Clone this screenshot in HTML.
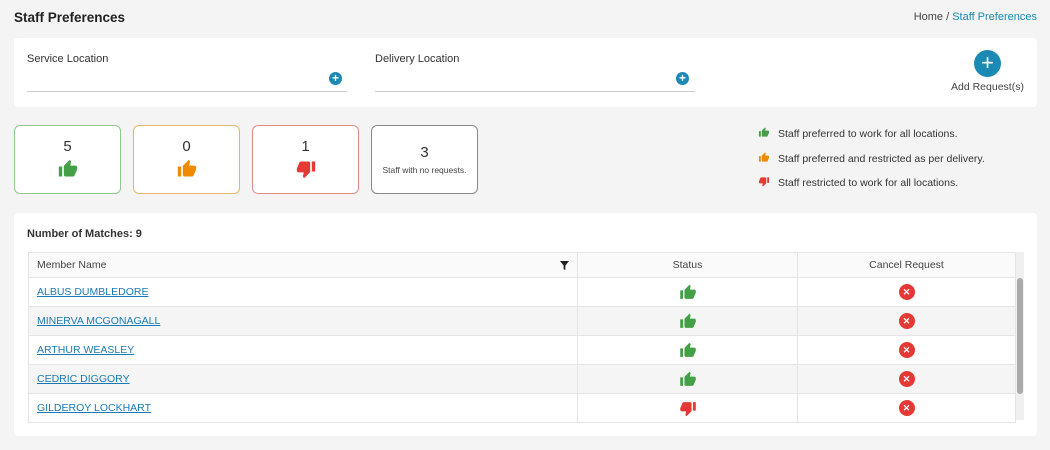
<!DOCTYPE html>
<html><head><style>
*{box-sizing:border-box;margin:0;padding:0}
body{width:1050px;height:450px;background:#f4f4f4;font-family:"Liberation Sans",sans-serif;color:#333;position:relative;overflow:hidden}
.a{position:absolute}
.panel{background:#fff;border-radius:4px}
.card{position:absolute;top:125px;width:107px;height:69px;background:#fff;border:1px solid;border-radius:6px;text-align:center}
.card .n{font-size:15px;margin-top:12px;color:#333}
.plus{position:absolute;width:13px;height:13px;border-radius:50%;background:#1a8ab5;color:#fff;font-size:12px;line-height:13px;text-align:center;font-weight:bold}
table{border-collapse:collapse;width:988px;font-size:10.5px}
td,th{border:1px solid #e4e4e4;height:29px;vertical-align:middle}
th{height:25px;font-weight:normal;background:#fafafa;color:#444}
tr:nth-child(odd) td{background:#f5f5f5}
a{color:#1a7ab5}
.x{display:inline-flex;align-items:center;justify-content:center;width:16px;height:16px;border-radius:50%;background:#e53935;color:#fff;font-size:9px;font-weight:bold;vertical-align:middle}
svg{vertical-align:middle}
</style></head><body>
<svg width="0" height="0" style="position:absolute"><defs>
<symbol id="up" viewBox="0 0 24 24"><path d="M1 21h4V9H1v12zm22-11c0-1.1-.9-2-2-2h-6.31l.95-4.570.03-.32c0-.41-.17-.79-.44-1.06L14.17 1 7.59 7.59C7.22 7.95 7 8.45 7 9v10c0 1.1.9 2 2 2h9c.83 0 1.54-.5 1.84-1.22l3.02-7.05c.09-.23.14-.47.14-.73v-2z"/></symbol>
<symbol id="dn" viewBox="0 0 24 24"><g transform="rotate(180 12 12)"><path d="M1 21h4V9H1v12zm22-11c0-1.1-.9-2-2-2h-6.31l.95-4.57.03-.32c0-.41-.17-.79-.44-1.06L14.17 1 7.59 7.59C7.22 7.95 7 8.45 7 9v10c0 1.1.9 2 2 2h9c.83 0 1.54-.5 1.84-1.22l3.02-7.05c.09-.23.14-.47.14-.73v-2z"/></g></symbol>
</defs></svg>
<div class="a" style="left:14px;top:10px;font-size:13.5px;font-weight:bold;color:#222">Staff Preferences</div>
<div class="a" style="right:13px;top:11px;font-size:11px;color:#444">Home / <span style="color:#1a8ab5">Staff Preferences</span></div>
<div class="a panel" style="left:14px;top:38px;width:1023px;height:69px"></div>
<div class="a" style="left:27px;top:53px;font-size:11px">Service Location</div>
<div class="a" style="left:27px;top:91px;width:320px;border-top:1px solid #ccc"></div>
<div class="plus" style="left:329px;top:72px">+</div>
<div class="a" style="left:375px;top:53px;font-size:11px">Delivery Location</div>
<div class="a" style="left:375px;top:91px;width:320px;border-top:1px solid #ccc"></div>
<div class="plus" style="left:676px;top:72px">+</div>
<div class="a" style="left:974px;top:50px;width:27px;height:27px;border-radius:50%;background:#1a8ab5;color:#fff;font-size:22px;line-height:26px;text-align:center">+</div>
<div class="a" style="left:951px;top:81px;font-size:10.5px;color:#444">Add Request(s)</div>

<div class="card" style="left:14px;border-color:#8fc98f"><div class="n">5</div><svg width="22" height="20" fill="#43a047" style="margin-top:4px"><use href="#up"/></svg></div>
<div class="card" style="left:133px;border-color:#e8b56a"><div class="n">0</div><svg width="22" height="20" fill="#f08a00" style="margin-top:4px"><use href="#up"/></svg></div>
<div class="card" style="left:252px;border-color:#e08a8a"><div class="n">1</div><svg width="22" height="20" fill="#e53935" style="margin-top:4px"><use href="#dn"/></svg></div>
<div class="card" style="left:371px;border-color:#888"><div class="n" style="margin-top:18px">3</div><div style="font-size:8.5px;margin-top:4px;color:#444">Staff with no requests.</div></div>

<div class="a" style="left:758px;top:122px;font-size:10.5px;line-height:24.5px;color:#333">
<div><svg width="12" height="11" fill="#43a047" style="vertical-align:-1px;margin-right:8px"><use href="#up"/></svg>Staff preferred to work for all locations.</div>
<div><svg width="12" height="11" fill="#f08a00" style="vertical-align:-1px;margin-right:8px"><use href="#up"/></svg>Staff preferred and restricted as per delivery.</div>
<div><svg width="12" height="11" fill="#e53935" style="vertical-align:-1px;margin-right:8px"><use href="#dn"/></svg>Staff restricted to work for all locations.</div>
</div>

<div class="a panel" style="left:14px;top:213px;width:1023px;height:223px"></div>
<div class="a" style="left:27px;top:228px;font-size:11px;font-weight:bold">Number of Matches: 9</div>
<div class="a" style="left:28px;top:252px">
<table>
<tr><th style="text-align:left;padding-left:8px;width:549px">Member Name<svg width="9" height="9" viewBox="0 0 10 10" style="float:right;margin-right:8px;margin-top:2px"><path d="M0 0h10L6 5v5L4 9V5z" fill="#222"/></svg></th><th style="width:220px">Status</th><th>Cancel Request</th></tr>
<tr><td style="padding-left:8px"><a href="#">ALBUS DUMBLEDORE</a></td><td align="center"><svg width="18" height="17" fill="#43a047"><use href="#up"/></svg></td><td align="center"><span class="x">✕</span></td></tr>
<tr><td style="padding-left:8px"><a href="#">MINERVA MCGONAGALL</a></td><td align="center"><svg width="18" height="17" fill="#43a047"><use href="#up"/></svg></td><td align="center"><span class="x">✕</span></td></tr>
<tr><td style="padding-left:8px"><a href="#">ARTHUR WEASLEY</a></td><td align="center"><svg width="18" height="17" fill="#43a047"><use href="#up"/></svg></td><td align="center"><span class="x">✕</span></td></tr>
<tr><td style="padding-left:8px"><a href="#">CEDRIC DIGGORY</a></td><td align="center"><svg width="18" height="17" fill="#43a047"><use href="#up"/></svg></td><td align="center"><span class="x">✕</span></td></tr>
<tr><td style="padding-left:8px"><a href="#">GILDEROY LOCKHART</a></td><td align="center"><svg width="18" height="17" fill="#e53935"><use href="#dn"/></svg></td><td align="center"><span class="x">✕</span></td></tr>
</table></div>
<div class="a" style="left:1016px;top:252px;width:8px;height:168px;background:#f0f0f0"></div>
<div class="a" style="left:1017px;top:278px;width:6px;height:116px;background:#aaa;border-radius:3px"></div>
</body></html>
